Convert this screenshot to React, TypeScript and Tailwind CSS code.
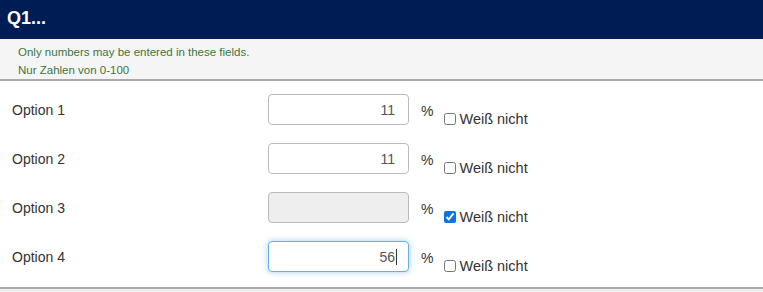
import React from 'react';

const rows = [
  { label: 'Option 1', value: '11', disabled: false, checked: false, focused: false },
  { label: 'Option 2', value: '11', disabled: false, checked: false, focused: false },
  { label: 'Option 3', value: '', disabled: true, checked: true, focused: false },
  { label: 'Option 4', value: '56', disabled: false, checked: false, focused: true },
];

const App: React.FC = () => {
  return (
    <div className="w-[763px] h-[292px] overflow-hidden bg-white font-['Liberation_Sans',Arial,sans-serif]">
      {/* Title bar */}
      <header className="h-[39px] bg-[#001c54] px-[7px] flex items-center">
        <h1 className="text-white font-bold text-[18px] leading-none -mt-[4px]">Q1...</h1>
      </header>

      {/* Hint */}
      <div className="h-[42px] bg-[#f5f5f5] border-b-2 border-[#aaa] pl-[18px] pt-[4px] text-[11.5px] leading-[18px] text-[#3c763d]">
        <div>Only numbers may be entered in these fields.</div>
        <div>Nur Zahlen von 0-100</div>
      </div>

      {/* Rows */}
      <div className="h-[206px] pt-[13px] flex flex-col gap-[17px]">
        {rows.map((r) => (
          <div key={r.label} className="flex items-start h-[32px]">
            <label className="w-[268px] pl-[12px] pt-[8px] text-[14px] leading-[16px] text-[#333]">{r.label}</label>
            <div className="relative">
              <input
                type="text"
                readOnly
                value={r.value}
                disabled={r.disabled}
                className={`w-[141px] h-[31px] rounded-[4px] border text-right pr-[13px] text-[14px] text-[#555] outline-none font-['Liberation_Sans',Arial,sans-serif] ${
                  r.disabled
                    ? 'bg-[#eee] border-[#bbb]'
                    : r.focused
                    ? 'bg-white border-[#66afe9] shadow-[0_0_6px_rgba(102,175,233,0.6)]'
                    : 'bg-white border-[#bbb]'
                }`}
              />
              {/* text caret */}
              {r.focused && <span className="absolute right-[12px] top-[8px] w-px h-[16px] bg-[#333]" />}
            </div>
            <span className="ml-[12px] pt-[10px] text-[14px] leading-[14px] text-[#333]">%</span>
            <label className="ml-[11px] mt-[18px] flex items-center text-[14.5px] leading-[14px] text-[#333]">
              <input
                type="checkbox"
                readOnly
                checked={r.checked}
                className="w-[12px] h-[12px] m-0 mr-[3px] accent-[#0b74de]"
              />
              Weiß nicht
            </label>
          </div>
        ))}
      </div>

      {/* Bottom edge */}
      <div className="h-[5px] border-t-2 border-[#aaa] bg-[#eee]" />
    </div>
  );
};

export default App;
